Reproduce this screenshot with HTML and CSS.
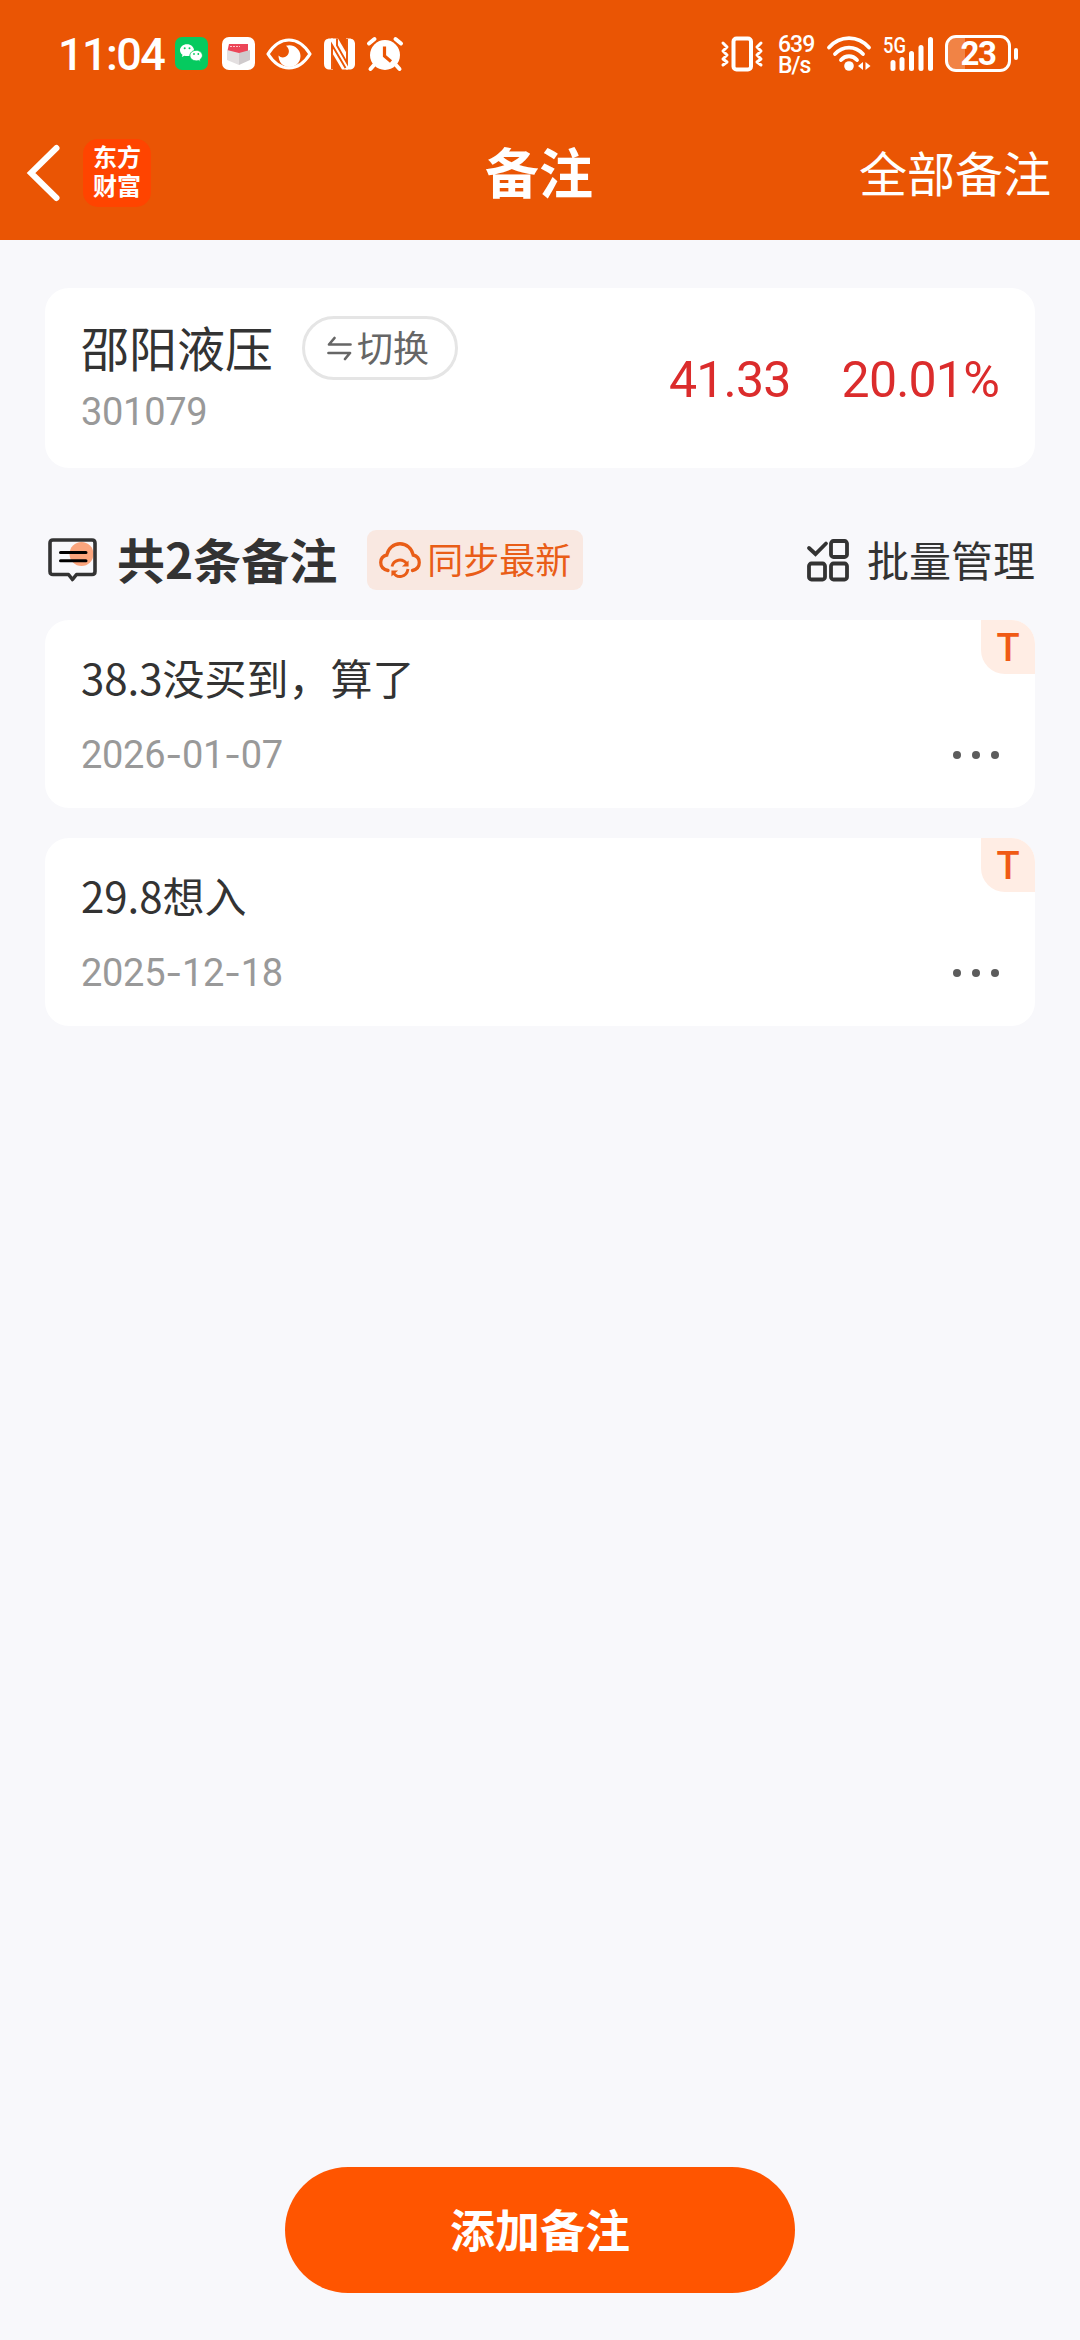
FILE: index.html
```html
<!DOCTYPE html>
<html lang="zh-CN">
<head>
<meta charset="UTF-8">
<title>备注</title>
<link rel="stylesheet" href="styles.css">
</head>
<body>
<div class="page">
  <header class="header">
    <div class="status">
      <div class="status-left">
        <span class="clock">11:04</span>
        <svg class="wechat" width="33" height="33" viewBox="0 0 33 33">
          <rect width="33" height="33" rx="7" fill="#06ca5f"/>
          <path d="M12 7.200c-4 0-7 2.700-7 6 0 1.900 1 3.500 2.500 4.600l-.7 2.200 2.600-1.300c.8.2 1.700.4 2.600.4 4 0 7-2.600 7-5.900s-3-6-7-6z" fill="#fff"/>
          <path d="M21.200 13.300c-3.500 0-6.300 2.400-6.300 5.300s2.800 5.300 6.300 5.300c.8 0 1.600-.1 2.200-.3l2.100 1.100-.6-1.900c1.500-1 2.500-2.500 2.500-4.200 0-2.900-2.700-5.300-6.200-5.300z" fill="#fff" stroke="#06ca5f" stroke-width=".9"/>
          <g fill="#06ca5f"><circle cx="9.700" cy="11.300" r="1"/><circle cx="14.500" cy="11.300" r="1"/><circle cx="19" cy="17" r=".9"/><circle cx="23.300" cy="17" r=".9"/></g>
        </svg>
        <svg class="box-app" width="33" height="33" viewBox="0 0 33 33">
          <rect width="33" height="33" rx="7" fill="#fff"/>
          <path d="M7 7h19v9H5z" fill="#ec4658"/>
          <path d="M5 13l12 3v12L5 23z" fill="#e3dfe0"/>
          <path d="M28 13l-11 3v12l11-5z" fill="#cfcacc"/>
          <path d="M8 9.500h10" stroke="#ffc5ca" stroke-width="1.200" stroke-dasharray="2 1"/>
        </svg>
        <svg class="eye" width="46" height="32" viewBox="0 0 46 32">
          <path d="M2 16C8 6.500 15 2 23 2s15 4.500 21 14c-6 9.500-13 14-21 14S8 25.500 2 16z" fill="none" stroke="#fff" stroke-width="3.200" stroke-linejoin="round"/>
          <path d="M20 7.800C27 5.500 34.500 11 34.500 18c0 6.500-5 11-11.300 11S12.500 24 12.500 17.500c2 2 4.500 2.500 7 1.200 4.500-2.300 4.500-7.700.5-10.900z" fill="#fff"/>
        </svg>
        <svg class="nfc" width="31" height="32" viewBox="0 0 31 32">
          <path d="M6 .5h3v31H6c-4 0-6-2-6-6v-19c0-4 2-6 6-6z" fill="#fff"/>
          <path d="M25 .5h-3v31h3c4 0 6-2 6-6v-19c0-4-2-6-6-6z" fill="#fff"/>
          <path d="M7 .5h7l10 17v14h-6L7 13z" fill="#fff"/>
          <path d="M8 31V7l13.500 23M23 1v24L13 7.500V.5" fill="none" stroke="#ea5504" stroke-width="1.900"/>
        </svg>
        <svg class="alarm" width="36" height="34" viewBox="0 0 36 34">
          <circle cx="18" cy="18" r="15" fill="#fff"/>
          <path d="M2 6.500L7.500 2M28.500 2L34 6.500M7 28l-3.500 4M29 28l3.500 4" fill="none" stroke="#fff" stroke-width="4" stroke-linecap="round"/>
          <path d="M17.500 9.500V19l6.500 5.500" fill="none" stroke="#ea5504" stroke-width="3.200"/>
        </svg>
      </div>
      <div class="status-right">
        <svg class="vibrate" width="42" height="36" viewBox="0 0 42 36">
          <rect x="12.500" y="2.500" width="17.500" height="31" rx="3" fill="none" stroke="#fff" stroke-width="4"/>
          <path d="M2 7l4 4-4 4 4 4-4 4 4 3-4 3M40 7l-4 4 4 4-4 4 4 4-4 3 4 3" fill="none" stroke="#fff" stroke-width="3" stroke-linecap="round" stroke-linejoin="round"/>
        </svg>
        <div class="speed"><span>639</span><span>B/s</span></div>
        <svg class="wifi" width="44" height="35" viewBox="0 0 44 35">
          <g fill="none" stroke="#fff" stroke-width="3.800" stroke-linecap="round"><path d="M2 11.500C13 -1 31 -1 42 11.500"/><path d="M8 18c8-8.500 20-8.500 28 0"/><path d="M14 24c4.500-5 11.500-5 16 0"/></g>
          <circle cx="22" cy="30" r="4.800" fill="#fff"/>
          <path d="M36 26v8l-5-4zM38.500 26v8l5-4z" fill="#fff"/>
        </svg>
        <svg class="signal" width="51" height="36" viewBox="0 0 51 36">
          <text x="0" y="17.300" class="signal-label" textLength="23" lengthAdjust="spacingAndGlyphs">5G</text>
          <g fill="#fff"><rect x="7.500" y="24" width="5" height="11" rx="2.500"/><rect x="16.500" y="21" width="5" height="14" rx="2.500"/><rect x="26" y="15" width="5" height="20" rx="2.500"/><rect x="35.500" y="9" width="5" height="26" rx="2.500"/><rect x="45" y="1" width="5" height="34" rx="2.500"/></g>
        </svg>
        <div class="battery"><span>23</span></div>
        <i class="battery-nub"></i>
      </div>
    </div>
    <nav class="nav">
      <div class="nav-left">
        <svg width="33" height="56" viewBox="0 0 33 56"><path d="M29.500 3L4 28l25.500 25" fill="none" stroke="#fff" stroke-width="6" stroke-linecap="round" stroke-linejoin="miter"/></svg>
        <div class="logo"><span>东方</span><span>财富</span></div>
      </div>
      <h1 class="title">备注</h1>
      <a class="all">全部备注</a>
    </nav>
  </header>

  <main class="content">
    <section class="card stock">
      <div class="stock-info">
        <div class="stock-head">
          <span class="stock-name">邵阳液压</span>
          <span class="switch">
            <svg width="25" height="25" viewBox="0 0 25 25"><path d="M23.500 8.500H2L7.500 2M1.500 17H23l-5 6" fill="none" stroke="#666" stroke-width="2.700" stroke-linecap="round" stroke-linejoin="round"/></svg>
            <span class="label">切换</span>
          </span>
        </div>
        <div class="code">301079</div>
      </div>
      <div class="quote"><span>41.33</span><span>20.01%</span></div>
    </section>

    <div class="toolbar">
      <svg class="note-icon" width="49" height="44" viewBox="0 0 49 44">
        <circle cx="33.500" cy="16" r="12" fill="#fba57d"/>
        <path d="M5 2H44Q47 2 47 5V33.500Q47 36.500 44 36.500H28.500L24.500 41.500L20.500 36.500H5Q2 36.500 2 33.500V5Q2 2 5 2z" fill="none" stroke="#333" stroke-width="3.600" stroke-linejoin="round"/>
        <path d="M12.500 14.500h25.500M12.500 22.700h25.500" stroke="#000" stroke-width="3" stroke-linecap="round"/>
      </svg>
      <h2 class="count label">共2条备注</h2>
      <span class="sync">
        <svg width="42" height="37" viewBox="0 0 44 37" preserveAspectRatio="none">
          <path d="M9.500 28.500C4.500 27.500 1.800 24.500 1.800 20.500c0-4 2.700-6.700 6.400-7.500C9.500 6.500 15 1.800 22 1.800S34.500 6.500 35.800 13c3.700.8 6.400 3.500 6.400 7.500 0 4-2.700 7-7.200 8" fill="none" stroke="#e95d17" stroke-width="3.400" stroke-linecap="round"/>
          <path d="M13.600 24.500c1.500-7 11-9 15.500-2.500M30.400 27c-1.500 8.500-11.500 10-15.500 3.500" fill="none" stroke="#e95d17" stroke-width="3"/>
          <path d="M31 18.500v6h-7zM13 34.500v-6h7z" fill="#e95d17"/>
        </svg>
        <span class="label">同步最新</span>
      </span>
      <span class="manage">
        <svg width="42" height="42" viewBox="0 0 42 42"><g fill="none" stroke="#333" stroke-width="3.800"><rect x="24" y="2" width="16" height="16" rx="2.500"/><rect x="2" y="24.500" width="16" height="16" rx="2.500"/><rect x="24" y="24.500" width="16" height="16" rx="2.500"/><path d="M2 9l6.500 6L19 4.500" stroke-linecap="round"/></g></svg>
        <span class="label">批量管理</span>
      </span>
    </div>

    <article class="card note">
      <span class="tag">T</span>
      <p class="text">38.3没买到，算了</p>
      <div class="meta">
        <time class="date">2026<b>-</b>01<b>-</b>07</time>
        <span class="more"><i></i><i></i><i></i></span>
      </div>
    </article>
    <article class="card note">
      <span class="tag">T</span>
      <p class="text">29.8想入</p>
      <div class="meta">
        <time class="date">2025<b>-</b>12<b>-</b>18</time>
        <span class="more"><i></i><i></i><i></i></span>
      </div>
    </article>
  </main>

  <footer class="footer"><button class="add">添加备注</button></footer>
</div>
</body>
</html>
```
FILE: styles.css
```css
* { box-sizing: border-box; }
body {
  margin: 0;
  background: #f8f8fb;
  color: #333;
  font-family: "Noto Sans CJK SC", sans-serif;
}
svg { display: block; flex: none; overflow: visible; }
.page { width: 1080px; height: 2340px; display: flex; flex-direction: column; }

/* lifts CJK labels to the optical centre of their row */
.label { padding-bottom: 4px; }

/* header */
.header { height: 240px; flex: none; background: #ea5504; color: #fff; }
.status {
  height: 107px;
  padding: 0 62px 0 58px;
  display: flex;
  justify-content: space-between;
  align-items: center;
}
.status-left, .status-right { display: flex; align-items: center; }
.clock {
  width: 117px;
  padding-top: 2px;
  font: 500 45px/50px Roboto, sans-serif;
  letter-spacing: -1.6px;
}
.box-app { margin-left: 14px; }
.eye { margin-left: 11px; }
.nfc { margin-left: 12px; }
.alarm { margin-left: 12px; }
.speed {
  width: 36px;
  margin-left: 15px;
  padding-top: 2px;
  display: flex;
  flex-direction: column;
  font: 500 23px/21px Roboto, sans-serif;
  letter-spacing: -1px;
}
.wifi { margin-left: 13px; }
.signal { margin-left: 12px; }
.signal-label { font: 500 22px Roboto, sans-serif; fill: #fff; }
.battery {
  width: 66px;
  height: 37px;
  margin-left: 11px;
  border: 3px solid #fff;
  border-radius: 11px;
  background: linear-gradient(90deg, #f18345 28%, #ea5504 28%);
  font: 700 33px/32px Roboto, sans-serif;
  letter-spacing: -1.5px;
  text-align: center;
}
.battery-nub { width: 4px; height: 12px; margin-left: 3px; border-radius: 2px; background: #fff; }

.nav {
  height: 132px;
  padding: 0 29px 0 27px;
  display: grid;
  grid-template-columns: 1fr auto 1fr;
  align-items: center;
}
.nav-left { display: flex; align-items: center; gap: 23px; }
.logo {
  width: 68px;
  height: 68px;
  padding-top: 2px;
  border-radius: 15px;
  background: #ff4400;
  display: flex;
  flex-direction: column;
  align-items: center;
  font-weight: 700;
  font-size: 24px;
  line-height: 29px;
}
.title { margin: 0; padding-bottom: 4px; font-size: 54px; font-weight: 700; line-height: 80px; }
.all { justify-self: end; padding-bottom: 5px; font-size: 48px; line-height: 72px; }

/* content */
.content { flex: 1; padding: 48px 45px 0; }
.card { background: #fff; border-radius: 24px; }
.stock {
  height: 180px;
  padding: 28px 36px 0;
  display: flex;
  justify-content: space-between;
}
.stock-head { display: flex; align-items: center; gap: 29px; height: 64px; }
.stock-name { padding-bottom: 4px; font-size: 48px; line-height: 64px; }
.switch {
  width: 156px;
  height: 64px;
  padding-left: 22px;
  border: 3px solid #e5e5e5;
  border-radius: 32px;
  display: flex;
  align-items: center;
  gap: 5px;
  color: #666;
  font-size: 36px;
  line-height: 52px;
}
.code {
  margin-top: 10px;
  color: #999;
  font: 400 38px/44px Roboto, sans-serif;
  letter-spacing: -.3px;
}
.quote {
  display: flex;
  gap: 51px;
  padding-top: 34px;
  color: #db2c2c;
  font: 400 50px/60px Roboto, sans-serif;
  letter-spacing: -.8px;
}

.toolbar { height: 152px; padding: 32px 0 0 3px; display: flex; align-items: center; }
.count { margin: 0 0 0 20px; font-size: 48px; font-weight: 700; line-height: 60px; }
.sync {
  width: 216px;
  height: 60px;
  margin-left: 30px;
  padding-left: 12px;
  border-radius: 9px;
  background: #f9e8e1;
  display: flex;
  align-items: center;
  gap: 6px;
  color: #e95d17;
  font-size: 36px;
  line-height: 52px;
}
.manage {
  margin-left: auto;
  display: flex;
  align-items: center;
  gap: 18px;
  font-size: 42px;
  line-height: 60px;
}
.manage .label { padding-bottom: 2px; }

.note { position: relative; height: 188px; padding: 27px 36px 0; margin-bottom: 30px; }
.tag {
  position: absolute;
  top: 0;
  right: 0;
  width: 54px;
  height: 54px;
  border-radius: 0 24px 0 24px;
  background: #ffede4;
  color: #f05a14;
  font: 500 38px/56px Roboto, sans-serif;
  text-align: center;
}
.text { margin: 0; font-size: 42px; line-height: 60px; }
.meta { display: flex; justify-content: space-between; align-items: center; height: 44px; margin-top: 26px; }
.date {
  color: #999;
  font: 400 38px/44px Roboto, sans-serif;
  letter-spacing: -.3px;
}
.date b { font: 400 37px/44px Inter, sans-serif; }
.more { display: flex; gap: 11px; }
.more i { width: 8px; height: 8px; border-radius: 50%; background: #5c5c5c; }

.footer { flex: none; height: 173px; display: flex; justify-content: center; align-items: flex-start; }
.add {
  width: 510px;
  height: 126px;
  padding: 0 0 3px;
  border: 0;
  border-radius: 63px;
  background: #ff5500;
  color: #fff;
  font: 700 45px/66px "Noto Sans CJK SC", sans-serif;
}
```
